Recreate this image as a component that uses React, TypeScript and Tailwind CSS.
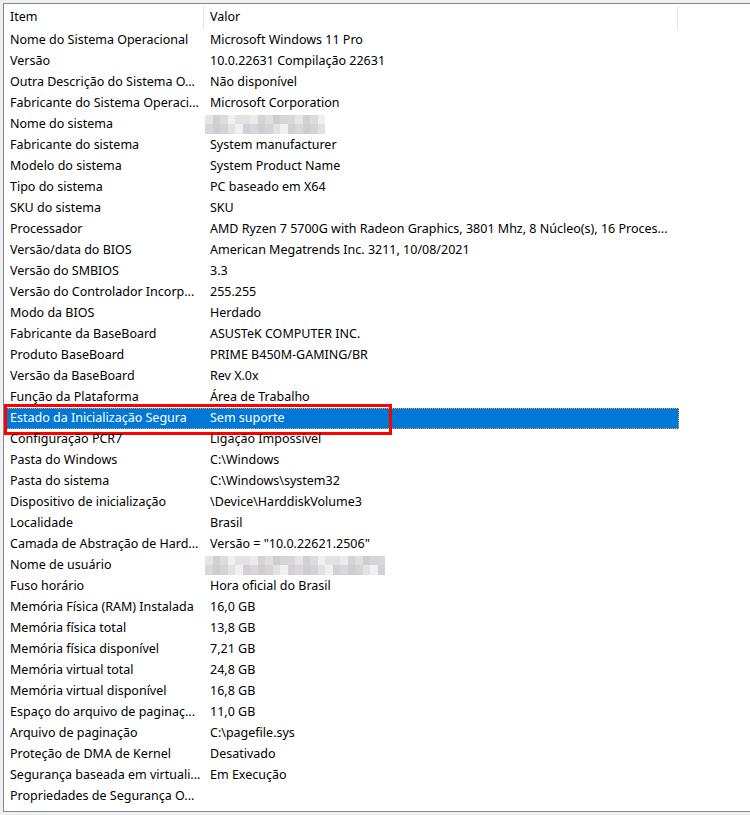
import React from "react";

type Row = { item: string; value?: string; blur?: number; selected?: boolean };

const rows: Row[] = [
  { item: "Nome do Sistema Operacional", value: "Microsoft Windows 11 Pro" },
  { item: "Versão", value: "10.0.22631 Compilação 22631" },
  { item: "Outra Descrição do Sistema O...", value: "Não disponível" },
  { item: "Fabricante do Sistema Operaci...", value: "Microsoft Corporation" },
  { item: "Nome do sistema", blur: 16 },
  { item: "Fabricante do sistema", value: "System manufacturer" },
  { item: "Modelo do sistema", value: "System Product Name" },
  { item: "Tipo do sistema", value: "PC baseado em X64" },
  { item: "SKU do sistema", value: "SKU" },
  {
    item: "Processador",
    value: "AMD Ryzen 7 5700G with Radeon Graphics, 3801 Mhz, 8 Núcleo(s), 16 Proces...",
  },
  { item: "Versão/data do BIOS", value: "American Megatrends Inc. 3211, 10/08/2021" },
  { item: "Versão do SMBIOS", value: "3.3" },
  { item: "Versão do Controlador Incorp...", value: "255.255" },
  { item: "Modo da BIOS", value: "Herdado" },
  { item: "Fabricante da BaseBoard", value: "ASUSTeK COMPUTER INC." },
  { item: "Produto BaseBoard", value: "PRIME B450M-GAMING/BR" },
  { item: "Versão da BaseBoard", value: "Rev X.0x" },
  { item: "Função da Plataforma", value: "Área de Trabalho" },
  { item: "Estado da Inicialização Segura", value: "Sem suporte", selected: true },
  { item: "Configuração PCR7", value: "Ligação Impossível" },
  { item: "Pasta do Windows", value: "C:\\Windows" },
  { item: "Pasta do sistema", value: "C:\\Windows\\system32" },
  { item: "Dispositivo de inicialização", value: "\\Device\\HarddiskVolume3" },
  { item: "Localidade", value: "Brasil" },
  { item: "Camada de Abstração de Hard...", value: 'Versão = "10.0.22621.2506"' },
  { item: "Nome de usuário", blur: 24 },
  { item: "Fuso horário", value: "Hora oficial do Brasil" },
  { item: "Memória Física (RAM) Instalada", value: "16,0 GB" },
  { item: "Memória física total", value: "13,8 GB" },
  { item: "Memória física disponível", value: "7,21 GB" },
  { item: "Memória virtual total", value: "24,8 GB" },
  { item: "Memória virtual disponível", value: "16,8 GB" },
  { item: "Espaço do arquivo de paginaç...", value: "11,0 GB" },
  { item: "Arquivo de paginação", value: "C:\\pagefile.sys" },
  { item: "Proteção de DMA de Kernel", value: "Desativado" },
  { item: "Segurança baseada em virtuali...", value: "Em Execução" },
  { item: "Propriedades de Segurança O..." },
];

// pixelated mosaic tones
const tones = [
  "bg-[#e6e4e6]",
  "bg-[#d6d3d6]",
  "bg-[#dcdcde]",
  "bg-[#cfcdd1]",
  "bg-[#e2e2e2]",
  "bg-[#d9d7db]",
  "bg-[#ebebeb]",
  "bg-[#d2d0d4]",
  "bg-[#e0dede]",
  "bg-[#f0f0f2]",
  "bg-[#d5d5d8]",
  "bg-[#e4e2e0]",
];

function Mosaic({ cols }: { cols: number }) {
  const cells = [0, 1].flatMap((r) =>
    Array.from({ length: cols }, (_, c) => tones[(c * 7 + r * 5 + c * r * 3) % tones.length])
  );
  return (
    <div
      className="grid h-[20px] mt-[-1px]"
      style={{ gridTemplateColumns: `repeat(${cols}, 7.5px)` }}
    >
      {cells.map((t, i) => (
        <div key={i} className={t} />
      ))}
    </div>
  );
}

export default function App() {
  return (
    <div className="h-[815px] w-[750px] overflow-hidden bg-[#f0f0f0] pl-[3px] pt-[3px] font-['Noto_Sans',sans-serif] text-[12.5px] text-black">
      <div className="h-[809px] w-[760px] overflow-hidden border-l border-t border-b border-[#828790] bg-white">
        <div className="flex h-[26px] items-center pt-[1px]">
          <div className="flex h-[24px] w-[200px] items-center border-r border-[#e5e5e5] pl-[6px]">
            Item
          </div>
          <div className="flex h-[24px] w-[474px] items-center border-r border-[#e5e5e5] pl-[6px]">
            Valor
          </div>
        </div>
        <div className="flex flex-col">
          {rows.map((r) => (
            <div key={r.item} className="relative h-[21px] shrink-0">
              <div
                className={
                  r.selected
                    ? "flex h-full w-[675px] items-center border border-dotted border-[#f29b3a] bg-[#0078d7] text-white"
                    : "flex h-full w-[675px] items-center border border-transparent"
                }
              >
                <div className="w-[200px] overflow-hidden whitespace-nowrap pl-[5px]">{r.item}</div>
                <div className="flex-1 overflow-hidden whitespace-nowrap pl-[5px]">
                  {r.blur ? (
                    <div className="ml-[-5px]">
                      <Mosaic cols={r.blur} />
                    </div>
                  ) : (
                    r.value
                  )}
                </div>
              </div>
              {r.selected && (
                <div className="pointer-events-none absolute left-0 top-[-4px] h-[31px] w-[388px] border-[3px] border-[#ff0000]" />
              )}
            </div>
          ))}
        </div>
      </div>
    </div>
  );
}
